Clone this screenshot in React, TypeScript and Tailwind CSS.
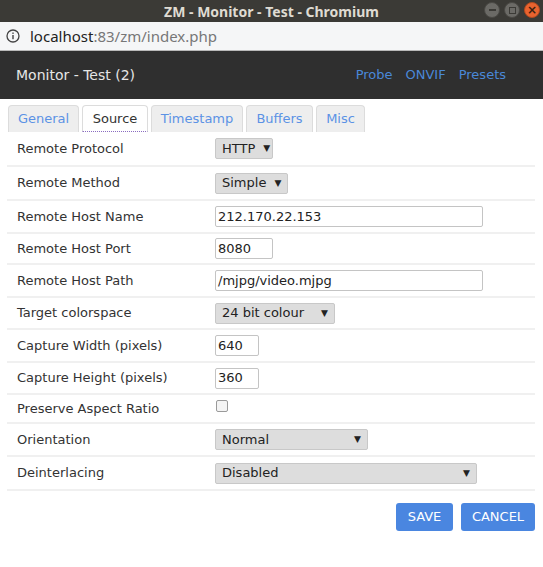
import React from 'react';

const font = { fontFamily: '"DejaVu Sans", Verdana, sans-serif' };

const Arrow: React.FC = () => <span className="text-[9px] leading-none ml-auto pl-2">▼</span>;

const Select: React.FC<{ value: string; width: string }> = ({ value, width }) => (
  <div
    className={`flex items-center h-[21px] px-[6px] bg-[#dddddd] border border-[#c8c8c8] rounded-[2px] text-[13px] text-[#222] ${width}`}
  >
    <span>{value}</span>
    <Arrow />
  </div>
);

const Input: React.FC<{ value: string; width: string }> = ({ value, width }) => (
  <div
    className={`flex items-center h-[21px] px-[2px] bg-white border border-[#c4c4c4] rounded-[2px] text-[13px] text-[#222] ${width}`}
  >
    {value}
  </div>
);

const rows: { label: string; h: string; field: React.ReactNode }[] = [
  { label: 'Remote Protocol', h: 'h-[35px]', field: <Select value="HTTP" width="w-[58px]" /> },
  { label: 'Remote Method', h: 'h-[34px]', field: <Select value="Simple" width="w-[73px]" /> },
  { label: 'Remote Host Name', h: 'h-[33px]', field: <Input value="212.170.22.153" width="w-[268px]" /> },
  { label: 'Remote Host Port', h: 'h-[31px]', field: <Input value="8080" width="w-[58px]" /> },
  { label: 'Remote Host Path', h: 'h-[33px]', field: <Input value="/mjpg/video.mjpg" width="w-[268px]" /> },
  { label: 'Target colorspace', h: 'h-[32px]', field: <Select value="24 bit colour" width="w-[120px]" /> },
  { label: 'Capture Width (pixels)', h: 'h-[33px]', field: <Input value="640" width="w-[44px]" /> },
  { label: 'Capture Height (pixels)', h: 'h-[32px]', field: <Input value="360" width="w-[44px]" /> },
  {
    label: 'Preserve Aspect Ratio',
    h: 'h-[29px]',
    field: <div className="w-[12px] h-[12px] mt-[-6px] ml-[1px] border border-[#9a9a9a] rounded-[2px] bg-[#f4f4f4]" />,
  },
  { label: 'Orientation', h: 'h-[33px]', field: <Select value="Normal" width="w-[153px]" /> },
  { label: 'Deinterlacing', h: 'h-[34px]', field: <Select value="Disabled" width="w-[262px]" /> },
];

const tabs: { name: string; w: string }[] = [
  { name: 'General', w: 'w-[71px]' },
  { name: 'Source', w: 'w-[66px]' },
  { name: 'Timestamp', w: 'w-[92px]' },
  { name: 'Buffers', w: 'w-[67px]' },
  { name: 'Misc', w: 'w-[49px]' },
];

const App: React.FC = () => {
  return (
    <div className="w-[543px] h-[567px] bg-white overflow-hidden" style={font}>
      {/* window title bar */}
      <div className="h-[22px] bg-[#3b3a36] flex items-center relative">
        <div className="flex-1 text-center text-[14px] font-bold text-[#dfdbd2]" style={{ fontFamily: '"Noto Sans", sans-serif' }}>
          ZM - Monitor - Test - Chromium
        </div>
        <div className="absolute right-[3px] top-[2px] flex gap-[4px]">
          <div className="w-[16px] h-[16px] rounded-full bg-[#6b6a66] border border-[#4a4945] flex items-center justify-center">
            <div className="w-[7px] h-[2px] bg-[#3b3a36]" />
          </div>
          <div className="w-[16px] h-[16px] rounded-full bg-[#6b6a66] border border-[#4a4945] flex items-center justify-center">
            <div className="w-[7px] h-[7px] border border-[#3b3a36]" />
          </div>
          <div className="w-[16px] h-[16px] rounded-full bg-[#e9632f] border border-[#b24a20] flex items-center justify-center text-[#3b2010] text-[12px] leading-none font-bold">
            ×
          </div>
        </div>
      </div>

      {/* address bar */}
      <div className="h-[29px] bg-[#f5f6f7] border-b border-[#b9b9b9] flex items-center px-[6px]" style={{ fontFamily: '"Noto Sans", sans-serif' }}>
        <svg width="14" height="14" viewBox="0 0 14 14" className="mr-[10px]">
          <circle cx="7" cy="7" r="6" fill="none" stroke="#444" strokeWidth="1.3" />
          <rect x="6.3" y="6" width="1.4" height="4.2" fill="#444" />
          <rect x="6.3" y="3.5" width="1.4" height="1.4" fill="#444" />
        </svg>
        <span className="text-[15px] text-[#222]">localhost</span>
        <span className="text-[15px] text-[#777]">:83/zm/index.php</span>
      </div>

      {/* monitor header */}
      <div className="h-[48px] bg-[#2f2f2f] flex items-center pl-[16px] pr-[37px]">
        <div className="text-[14px] text-[#e6e6e6]">Monitor - Test (2)</div>
        <div className="ml-auto flex gap-[13px] text-[13px] text-[#4a88d8]">
          <span>Probe</span>
          <span>ONVIF</span>
          <span>Presets</span>
        </div>
      </div>

      {/* tabs */}
      <div className="flex gap-[3px] pl-[8px] mt-[6px]">
        {tabs.map((t) => (
          <div
            key={t.name}
            className={`h-[27px] ${t.w} flex items-center justify-center text-[13px] border rounded-t-[4px] ${
              t.name === 'Source'
                ? 'bg-white border-[#dcdcdc] border-b-[#8a6cc0] [border-bottom-style:dotted] text-[#333]'
                : 'bg-[#eeeeee] border-[#dcdcdc] border-b-0 text-[#5b92e5]'
            }`}
          >
            {t.name}
          </div>
        ))}
      </div>

      {/* form table */}
      <div className="mx-[7px] w-[528px]">
        {rows.map((r) => (
          <div key={r.label} className={`${r.h} flex items-center border-b-2 border-[#f0f0f0] pl-[10px]`}>
            <div className="w-[198px] text-[13px] text-[#333]">{r.label}</div>
            <div className="flex items-center">{r.field}</div>
          </div>
        ))}
      </div>

      <div className="flex justify-end gap-[8px] pr-[8px] mt-[12px]">
        <div className="w-[57px] h-[28px] rounded-[3px] bg-[#4a86e0] text-white text-[13px] flex items-center justify-center">
          SAVE
        </div>
        <div className="w-[74px] h-[28px] rounded-[3px] bg-[#4a86e0] text-white text-[13px] flex items-center justify-center">
          CANCEL
        </div>
      </div>
    </div>
  );
};

export default App;
